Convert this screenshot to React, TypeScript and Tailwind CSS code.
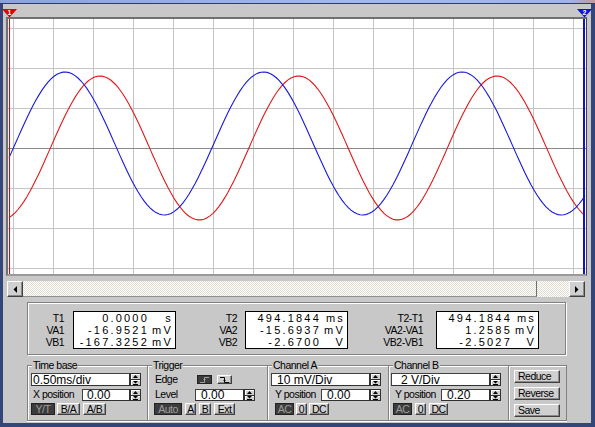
import React from "react";

// screen canvas size (inner white area)
const W = 578;
const H = 255;
const PERIOD = 198.5;

function wave(peakX: number, center: number, amp: number) {
  const pts: string[] = [];
  for (let x = 1; x <= W; x += 3) {
    const px = x + 8;
    const y = center - amp * Math.cos((2 * Math.PI * (px - peakX)) / PERIOD) - 19;
    pts.push(`${x},${y.toFixed(1)}`);
  }
  return pts.join(" ");
}

const RAISED =
  "bg-[#d0d0d0] border border-t-white border-l-white border-r-[#404040] border-b-[#404040] shadow-[inset_-1px_-1px_0_#8a8a8a]";
const PRESSED = "bg-[#3c3c3c] border border-[#222222] text-[#9c9c9c]";

function Screen() {
  const vs = Array.from({ length: 15 }, (_, k) => 5 + 40 * k);
  const hs = Array.from({ length: 7 }, (_, k) => 9 + 40 * k);
  return (
    <div className="ml-[3px] w-[581px] h-[259px] border-t-2 border-l-2 border-b-2 border-r border-[#707070] border-b-[#9a9a9a] border-r-[#404040] bg-white">
      <svg width={W} height={H} className="block">
        {vs.map((x) => (
          <line key={"v" + x} x1={x + 0.5} y1={0} x2={x + 0.5} y2={H} stroke="#c4c4c4" strokeWidth={1} />
        ))}
        {hs.map((y) => (
          <line
            key={"h" + y}
            x1={0}
            y1={y + 0.5}
            x2={W}
            y2={y + 0.5}
            stroke={y === 129 ? "#8a8a8a" : "#c4c4c4"}
            strokeWidth={1}
          />
        ))}
        <polyline points={wave(100, 148, 72)} fill="none" stroke="#e01818" strokeWidth={1.1} />
        <polyline points={wave(65, 143.5, 71.5)} fill="none" stroke="#1818e0" strokeWidth={1.1} />
        <line x1={1.5} y1={0} x2={1.5} y2={H} stroke="#e00000" strokeWidth={1} />
        <line x1={576} y1={0} x2={576} y2={H} stroke="#1010d0" strokeWidth={2} />
      </svg>
    </div>
  );
}

function ArrowBtn({ dir }: { dir: "left" | "right" }) {
  return (
    <div className={`w-[16px] h-[16px] flex items-center justify-center ${RAISED}`}>
      <svg width="4" height="7" viewBox="0 0 4 7">
        <path d={dir === "left" ? "M4 0V7L0.5 3.5Z" : "M0 0V7L3.5 3.5Z"} fill="#000" />
      </svg>
    </div>
  );
}

function Scrollbar() {
  return (
    <div className="mt-[5px] ml-[4px] w-[578px] h-[16px] flex bg-[image:repeating-conic-gradient(#ffffff_0%_25%,#e2ded2_0%_50%)] bg-[length:2px_2px]">
      <ArrowBtn dir="left" />
      <div className="flex-1 border-r border-b border-r-[#707070] border-b-[#909090]" />
      <div className="w-[32px]" />
      <ArrowBtn dir="right" />
    </div>
  );
}

function Labels({ className, items }: { className: string; items: string[] }) {
  return (
    <div className={`flex flex-col pt-px text-right text-[10.5px] leading-[12px] tracking-[-0.5px] ${className}`}>
      {items.map((t) => (
        <span key={t}>{t}</span>
      ))}
    </div>
  );
}

function ValueBox({ rows }: { rows: [string, string][] }) {
  return (
    <div className="w-[103px] h-[38px] bg-white border border-black flex flex-col text-[11px] leading-[12px] tracking-[2.2px]">
      {rows.map(([n, u]) => (
        <div key={n} className="flex">
          <span className="w-[75px] text-right">{n}</span>
          <span className="w-[24px] text-right">{u}</span>
        </div>
      ))}
    </div>
  );
}

function Readout() {
  return (
    <div className="mt-[5px] ml-[24px] w-[539px] h-[53px] border border-[#808080] shadow-[inset_1px_1px_0_#fff,1px_1px_0_#fff] flex pt-[8px]">
      <Labels className="w-[36px] mr-[9px]" items={["T1", "VA1", "VB1"]} />
      <ValueBox
        rows={[
          ["0.0000", "s"],
          ["-16.9521", "mV"],
          ["-167.3252", "mV"],
        ]}
      />
      <Labels className="w-[61px] mr-[8px]" items={["T2", "VA2", "VB2"]} />
      <ValueBox
        rows={[
          ["494.1844", "ms"],
          ["-15.6937", "mV"],
          ["-2.6700", "V"],
        ]}
      />
      <Labels className="w-[75px] mr-[13px]" items={["T2-T1", "VA2-VA1", "VB2-VB1"]} />
      <ValueBox
        rows={[
          ["494.1844", "ms"],
          ["1.2585", "mV"],
          ["-2.5027", "V"],
        ]}
      />
    </div>
  );
}

function Spin({ tall }: { tall?: boolean }) {
  return (
    <div className={`flex flex-col w-[11px] ${tall ? "h-[13px]" : "h-[12px]"} bg-[#d0d0d0] border border-[#303030]`}>
      <div className="flex-1 flex items-center justify-center border-b border-[#303030] shadow-[inset_1px_1px_0_#fff]">
        <svg width="5" height="3" viewBox="0 0 5 3">
          <path d="M2.5 0L5 3H0Z" fill="#000" />
        </svg>
      </div>
      <div className="flex-1 flex items-center justify-center shadow-[inset_1px_1px_0_#fff]">
        <svg width="5" height="4" viewBox="0 0 5 4">
          <path d="M0 0H5L2.5 2.5Z" fill="#000" />
          <rect x="0" y="3" width="5" height="1" fill="#000" />
        </svg>
      </div>
    </div>
  );
}

function Field({ className, children }: { className: string; children: React.ReactNode }) {
  return (
    <div
      className={`h-full bg-white border border-t-[#404040] border-l-[#404040] border-r-[#303030] border-b-[#303030] flex items-center text-[12px] leading-none tracking-normal whitespace-pre ${className}`}
    >
      {children}
    </div>
  );
}

function Btn({ className, pressed, children }: { className: string; pressed?: boolean; children: React.ReactNode }) {
  return (
    <div
      className={`h-[12px] flex items-center justify-center text-[10.5px] leading-none tracking-[-0.5px] ${
        pressed ? PRESSED : RAISED
      } ${className}`}
    >
      {children}
    </div>
  );
}

function EdgeBtn({ rising, pressed, className }: { rising?: boolean; pressed?: boolean; className?: string }) {
  const c = pressed ? "#a0a0a0" : "#000";
  return (
    <div className={`w-[15px] h-[9px] flex items-center justify-center ${pressed ? PRESSED : RAISED} ${className ?? ""}`}>
      <svg width="9" height="6" viewBox="0 0 9 6">
        <polyline
          points={rising ? "0,5.5 4.5,5.5 4.5,0.5 9,0.5" : "0,0.5 4.5,0.5 4.5,5.5 9,5.5"}
          fill="none"
          stroke={c}
          strokeWidth={1}
        />
        <path d={rising ? "M3 3L4.5 1.5L6 3Z" : "M3 3L4.5 4.5L6 3Z"} fill={c} />
      </svg>
    </div>
  );
}

function Group({ title, className, children }: { title?: string; className: string; children: React.ReactNode }) {
  return (
    <div
      className={`relative h-full flex flex-col border-y border-l border-[#808080] shadow-[inset_1px_1px_0_#fff,0_1px_0_#fff] ${className}`}
    >
      {title && (
        <span className="absolute -top-[7px] left-[4px] px-[1px] bg-[#c8c8c8] text-[10.5px] leading-[12px] tracking-[-0.5px]">
          {title}
        </span>
      )}
      {children}
    </div>
  );
}

function Controls() {
  return (
    <div className="mt-[10px] ml-[24px] flex h-[56px] text-[10.5px] tracking-[-0.5px]">
      <Group title="Time base" className="w-[120px] pl-[3px] pt-[7px]">
        <div className="flex h-[13px]">
          <Field className="w-[99px] pl-[1px]">0.50ms/div</Field>
          <Spin tall />
        </div>
        <div className="flex h-[12px] mt-[3px]">
          <span className="w-[51px] pl-[2px] flex items-center">X position</span>
          <Field className="w-[48px] pl-[4px]">0.00</Field>
          <Spin />
        </div>
        <div className="flex h-[12px] mt-[2px]">
          <Btn className="w-[24px]" pressed>
            Y/T
          </Btn>
          <Btn className="w-[23px] ml-[2px]">B/A</Btn>
          <Btn className="w-[23px] ml-[3px]">A/B</Btn>
        </div>
      </Group>

      <Group title="Trigger" className="w-[120px] pl-[6px] pt-[7px]">
        <div className="flex h-[13px] items-center">
          <span className="w-[43px] pl-[1px]">Edge</span>
          <EdgeBtn rising pressed />
          <EdgeBtn className="ml-[5px]" />
        </div>
        <div className="flex h-[12px] mt-[3px]">
          <span className="w-[41px] pl-[1px] flex items-center">Level</span>
          <Field className="w-[49px] pl-[5px]">0.00</Field>
          <Spin />
        </div>
        <div className="flex h-[12px] mt-[2px]">
          <Btn className="w-[28px]" pressed>
            Auto
          </Btn>
          <Btn className="w-[11px] ml-[3px]">A</Btn>
          <Btn className="w-[12px] ml-[3px]">B</Btn>
          <Btn className="w-[21px] ml-[3px]">Ext</Btn>
        </div>
      </Group>

      <Group title="Channel A" className="w-[121px] pl-[3px] pt-[7px]">
        <div className="flex h-[13px]">
          <Field className="w-[99px] pl-[5px]">10 mV/Div</Field>
          <Spin tall />
        </div>
        <div className="flex h-[12px] mt-[3px]">
          <span className="w-[50px] pl-[4px] flex items-center">Y position</span>
          <Field className="w-[49px] pl-[5px]">0.00</Field>
          <Spin />
        </div>
        <div className="flex h-[12px] mt-[2px] ml-[4px]">
          <Btn className="w-[19px]" pressed>
            AC
          </Btn>
          <Btn className="w-[11px] ml-[2px]">0</Btn>
          <Btn className="w-[20px] ml-[2px]">DC</Btn>
        </div>
      </Group>

      <Group title="Channel B" className="w-[120px] pl-[2px] pt-[7px]">
        <div className="flex h-[13px]">
          <Field className="w-[99px] pl-[9px]">2 V/Div</Field>
          <Spin tall />
        </div>
        <div className="flex h-[12px] mt-[3px]">
          <span className="w-[50px] pl-[4px] flex items-center">Y position</span>
          <Field className="w-[49px] pl-[5px]">0.20</Field>
          <Spin />
        </div>
        <div className="flex h-[12px] mt-[2px] ml-[2px]">
          <Btn className="w-[19px]" pressed>
            AC
          </Btn>
          <Btn className="w-[11px] ml-[3px]">0</Btn>
          <Btn className="w-[19px] ml-[3px]">DC</Btn>
        </div>
      </Group>

      <Group className="w-[59px] border-r pl-[5px] pt-[4px] gap-[4px]">
        {["Reduce", "Reverse", "Save"].map((t) => (
          <div key={t} className={`w-[46px] h-[13px] flex items-center pl-[3px] text-[10.5px] leading-none ${RAISED}`}>
            {t}
          </div>
        ))}
      </Group>
    </div>
  );
}

function CursorFlag({ n, color, className }: { n: string; color: string; className: string }) {
  return (
    <svg width="15" height="9" viewBox="0 0 15 9" className={`absolute ${className}`}>
      <polygon points="0,0 15,0 7.5,8.5" fill={color} />
      <text
        x="7.5"
        y="6"
        fontSize="7"
        fontWeight="bold"
        fill="#fff"
        textAnchor="middle"
        fontFamily="Liberation Sans, Arial, sans-serif"
      >
        {n}
      </text>
    </svg>
  );
}

export default function App() {
  return (
    <div className="relative w-[595px] h-[427px] overflow-hidden bg-[#c8c8c8] font-['Liberation_Sans',Arial,sans-serif] text-black select-none">
      <div className="h-[3px] bg-[image:linear-gradient(90deg,#8aa3dc,#a3b9ec_60%,#9fb3e6_96%,#c69a9a)]" />
      <div className="h-px bg-[#2e3c6c]" />
      <div className="flex flex-col h-[423px] border-l-[3px] border-r-[4px] border-b-[4px] border-[#34457a]">
        <div className="h-[13px] shrink-0" />
        <Screen />
        <Scrollbar />
        <Readout />
        <Controls />
      </div>
      <CursorFlag n="1" color="#e00000" className="left-[2px] top-[9px]" />
      <CursorFlag n="2" color="#1010e0" className="left-[577px] top-[9px]" />
    </div>
  );
}
